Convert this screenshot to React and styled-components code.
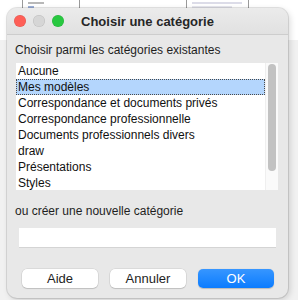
import styled, { createGlobalStyle } from 'styled-components'

const GlobalStyle = createGlobalStyle`
  html, body {
    margin: 0;
    padding: 0;
    background: #f1f1f1;
    font-family: "Liberation Sans", Arial, sans-serif;
  }
`

const Desk = styled.div`
  position: relative;
  width: 298px;
  height: 300px;
  overflow: hidden;
  background: linear-gradient(#ffffff 0, #ffffff 40px, #f1f1f1 40px);
`

const Thumbs = styled.div`
  display: flex;
  padding-left: 22px;
  gap: 106px;
`

const Thumb = styled.div`
  width: ${p => p.w}px;
  height: 40px;
  border-left: 1px solid #9a9a9a;
  border-right: 1px solid #9a9a9a;
  background: #fff;
  padding: 2px 5px;
  box-sizing: border-box;
  display: flex;
  flex-direction: column;
  gap: 2px;
`

const Line = styled.div`
  width: ${p => p.w}px;
  height: 2px;
  background: ${p => p.c};
`

const Dialog = styled.div`
  position: absolute;
  top: 8px;
  left: 7px;
  width: 281px;
  height: 290px;
  border-radius: 10px;
  background: #e8e8e8;
  box-shadow: 0 0 0 1px rgba(0, 0, 0, 0.1), 2px 2px 6px rgba(0, 0, 0, 0.15);
  overflow: hidden;
  display: flex;
  flex-direction: column;
`

const TitleBar = styled.div`
  height: 26px;
  flex: none;
  display: flex;
  align-items: center;
  position: relative;
  background: linear-gradient(#ebebeb, #e1e1e1);
  border-bottom: 1px solid #cdcdcd;
`

const Lights = styled.div`
  display: flex;
  gap: 7px;
  padding-left: 7px;
`

const Light = styled.span`
  width: 12px;
  height: 12px;
  border-radius: 50%;
  background: ${p => p.c};
  box-shadow: inset 0 0 0 0.5px rgba(0, 0, 0, 0.12);
`

const Title = styled.div`
  position: absolute;
  left: 0;
  right: 0;
  text-align: center;
  font-size: 13px;
  font-weight: 700;
  color: #262626;
`

const Body = styled.div`
  display: flex;
  flex-direction: column;
  padding: 0 10px 0 8px;
`

const Label = styled.div`
  margin-top: ${p => p.mt}px;
  height: 16px;
  line-height: 16px;
  font-size: 12px;
  color: #1e1e1e;
`

const ListBox = styled.div`
  margin: 5px 0 0 1px;
  height: 127px;
  display: flex;
  background: #fff;
`

const Items = styled.div`
  flex: 1;
  overflow: hidden;
`

const Item = styled.div`
  height: 16px;
  line-height: 16px;
  padding-left: 2px;
  font-size: 12px;
  color: #111;
  white-space: nowrap;
  box-sizing: border-box;
  background: ${p => (p.selected ? '#b4d6fd' : 'transparent')};
  outline: ${p => (p.selected ? '1px dotted #4a4a4a' : 'none')};
  outline-offset: -1px;
`

const Track = styled.div`
  width: 13px;
  flex: none;
  background: #fafafa;
  border-left: 1px solid #efefef;
  padding: 1px 0 0 2px;
  box-sizing: border-box;
`

const Thumbbar = styled.div`
  width: 8px;
  height: 107px;
  border-radius: 4px;
  background: #c2c2c2;
`

const Input = styled.input`
  margin: 9px 2px 0 4px;
  height: 20px;
  border: none;
  border-bottom: 1px solid #d4d4d4;
  background: #fff;
  padding: 0 4px;
  box-sizing: border-box;
  font: 12px "Liberation Sans", Arial, sans-serif;
  outline: none;
`

const Buttons = styled.div`
  display: flex;
  gap: 12px;
  margin: 21px 0 0 7px;
`

const Button = styled.button`
  width: 76px;
  height: 19px;
  border: none;
  border-radius: 5px;
  padding: 0;
  font: 13px "Liberation Sans", Arial, sans-serif;
  color: ${p => (p.primary ? '#fff' : '#1e1e1e')};
  background: ${p => (p.primary ? 'linear-gradient(#3796ff, #0b7cff)' : '#fff')};
  box-shadow: ${p =>
    p.primary ? '0 0.5px 1px rgba(0,0,0,0.2)' : '0 0 0 0.5px rgba(0,0,0,0.12), 0 1px 1px rgba(0,0,0,0.12)'};
`

const categories = [
  'Aucune',
  'Mes modèles',
  'Correspondance et documents privés',
  'Correspondance professionnelle',
  'Documents professionnels divers',
  'draw',
  'Présentations',
  'Styles',
]

export default function App() {
  return (
    <Desk>
      <GlobalStyle />
      <Thumbs>
        <Thumb w={58}>
          <Line w={16} c="#b8b8b8" />
          <Line w={6} c="#9db0d8" />
        </Thumb>
        <Thumb w={63}>
          <Line w={50} c="#dcdce8" />
          <Line w={40} c="#e6e6ee" />
        </Thumb>
      </Thumbs>
      <Dialog>
        <TitleBar>
          <Lights>
            <Light c="#fe5f57" />
            <Light c="#d6d6d6" />
            <Light c="#28c840" />
          </Lights>
          <Title>Choisir une catégorie</Title>
        </TitleBar>
        <Body>
          <Label mt={7}>Choisir parmi les catégories existantes</Label>
          <ListBox>
            <Items>
              {categories.map((c, i) => (
                <Item key={c} selected={i === 1}>{c}</Item>
              ))}
            </Items>
            <Track>
              <Thumbbar />
            </Track>
          </ListBox>
          <Label mt={13}>ou créer une nouvelle catégorie</Label>
          <Input />
          <Buttons>
            <Button>Aide</Button>
            <Button>Annuler</Button>
            <Button primary>OK</Button>
          </Buttons>
        </Body>
      </Dialog>
    </Desk>
  )
}
